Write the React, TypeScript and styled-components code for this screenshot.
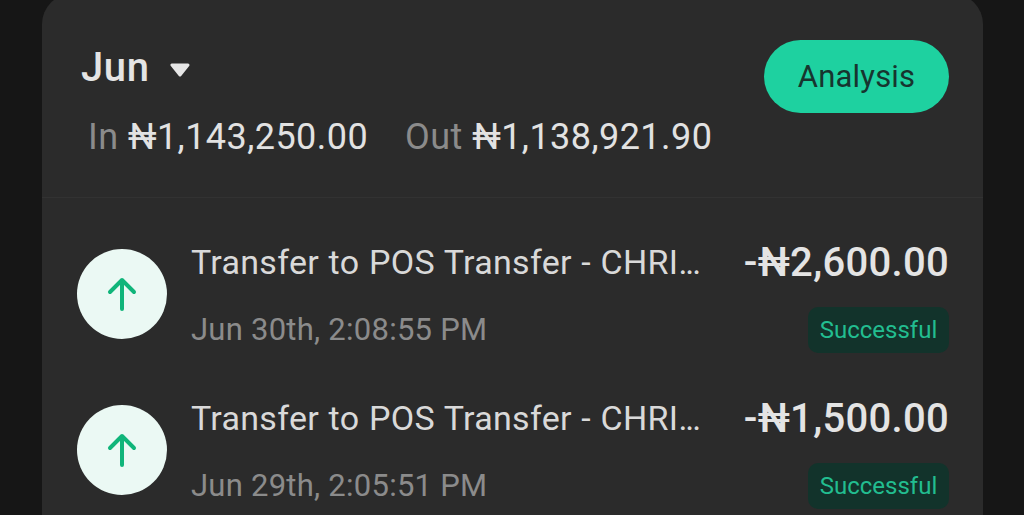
import React from "react";
import styled, { createGlobalStyle } from "styled-components";

const GlobalStyle = createGlobalStyle`
    html, body {
        margin: 0;
        height: 515px;
        overflow: hidden;
        background: #161616;
        font-family: Roboto, "Liberation Sans", sans-serif;
    }
`;

const transactions = [
    { id: 1, amount: "-₦2,600.00", date: "Jun 30th, 2:08:55 PM" },
    { id: 2, amount: "-₦1,500.00", date: "Jun 29th, 2:05:51 PM" },
];

const ArrowUp = () => (
    <svg width="30" height="34" viewBox="0 0 30 34" fill="none">
        <path
            d="M15 32V3M3 15L15 3L27 15"
            stroke="#10b57a"
            strokeWidth="4"
            strokeLinecap="round"
            strokeLinejoin="round"
        />
    </svg>
);

const App: React.FC = () => {
    return (
        <Page>
            <GlobalStyle />
            <Card>
                <Header>
                    <Summary>
                        <MonthRow>
                            <Month>Jun</Month>
                            <Caret viewBox="0 0 20 16" width="20" height="16">
                                <path
                                    d="M2 3h16L10 13z"
                                    fill="#e6e6e6"
                                    stroke="#e6e6e6"
                                    strokeWidth="3"
                                    strokeLinejoin="round"
                                />
                            </Caret>
                        </MonthRow>
                        <Totals>
                            <Total>
                                In <strong>₦1,143,250.00</strong>
                            </Total>
                            <Total>
                                Out <strong>₦1,138,921.90</strong>
                            </Total>
                        </Totals>
                    </Summary>
                    <AnalysisButton>Analysis</AnalysisButton>
                </Header>
                <List>
                    {transactions.map((tx) => (
                        <Row key={tx.id}>
                            <IconCircle>
                                <ArrowUp />
                            </IconCircle>
                            <Details>
                                <TopLine>
                                    <Title>
                                        Transfer to POS Transfer - CHRI
                                        <Dots>...</Dots>
                                    </Title>
                                    <Amount>{tx.amount}</Amount>
                                </TopLine>
                                <BottomLine>
                                    <DateText>{tx.date}</DateText>
                                    <Badge>Successful</Badge>
                                </BottomLine>
                            </Details>
                        </Row>
                    ))}
                </List>
            </Card>
        </Page>
    );
};

export default App;

const Page = styled.div`
    height: 515px;
    padding: 0 41px 0 42px;
    box-sizing: border-box;
    overflow: hidden;
    background: #161616;
`;

const Card = styled.div`
    height: 560px;
    margin-top: -6px;
    background: #2b2b2b;
    border-radius: 30px 30px 0 0;
`;

const Header = styled.div`
    display: flex;
    justify-content: space-between;
    align-items: flex-start;
    height: 204px;
    box-sizing: border-box;
    padding: 46px 34px 0 39px;
    border-bottom: 1px solid #323232;
`;

const Summary = styled.div`
    display: flex;
    flex-direction: column;
    padding-top: 6px;
`;

const MonthRow = styled.div`
    display: flex;
    align-items: center;
    gap: 20px;
    height: 44px;
`;

const Month = styled.span`
    font-size: 40px;
    font-weight: 500;
    line-height: 44px;
    letter-spacing: 0.6px;
    color: #e4e4e4;
`;

const Caret = styled.svg`
    margin-top: 3px;
`;

const Totals = styled.div`
    display: flex;
    gap: 37px;
    margin-top: 25px;
    padding-left: 7px;
`;

const Total = styled.span`
    font-size: 36px;
    line-height: 44px;
    letter-spacing: 0.45px;
    color: #8b8b8b;

    strong {
        font-weight: 400;
        color: #e2e2e2;
    }
`;

const AnalysisButton = styled.button`
    width: 185px;
    height: 73px;
    border: none;
    border-radius: 37px;
    background: #1ed1a0;
    color: #17352f;
    font-family: inherit;
    font-size: 31px;
    letter-spacing: 0.2px;
`;

const List = styled.div`
    display: flex;
    flex-direction: column;
    gap: 20px;
    padding: 28px 34px 0 35px;
`;

const Row = styled.div`
    display: flex;
    align-items: center;
    gap: 24px;
    height: 136px;
`;

const IconCircle = styled.div`
    flex: none;
    display: flex;
    align-items: center;
    justify-content: center;
    width: 90px;
    height: 90px;
    border-radius: 50%;
    background: #ebf9f4;
`;

const Details = styled.div`
    flex: 1;
    min-width: 0;
    display: flex;
    flex-direction: column;
    gap: 21px;
    padding-top: 3px;
`;

const TopLine = styled.div`
    display: flex;
    justify-content: space-between;
    align-items: center;
    height: 48px;
`;

const Title = styled.span`
    font-size: 34px;
    letter-spacing: 0.3px;
    word-spacing: 0.8px;
    color: #d9d9d9;
`;

const Dots = styled.span`
    letter-spacing: -2px;
`;

const Amount = styled.span`
    font-size: 40px;
    font-weight: 500;
    letter-spacing: 0.3px;
    color: #e4e4e4;
`;

const BottomLine = styled.div`
    display: flex;
    justify-content: space-between;
    align-items: center;
    height: 46px;
`;

const DateText = styled.span`
    padding-bottom: 2px;
    font-size: 31px;
    letter-spacing: 0.25px;
    color: #8b8b8b;
`;

const Badge = styled.span`
    display: flex;
    align-items: center;
    justify-content: center;
    width: 141px;
    height: 46px;
    border-radius: 10px;
    background: #12332b;
    color: #22bd90;
    font-size: 24px;
`;
